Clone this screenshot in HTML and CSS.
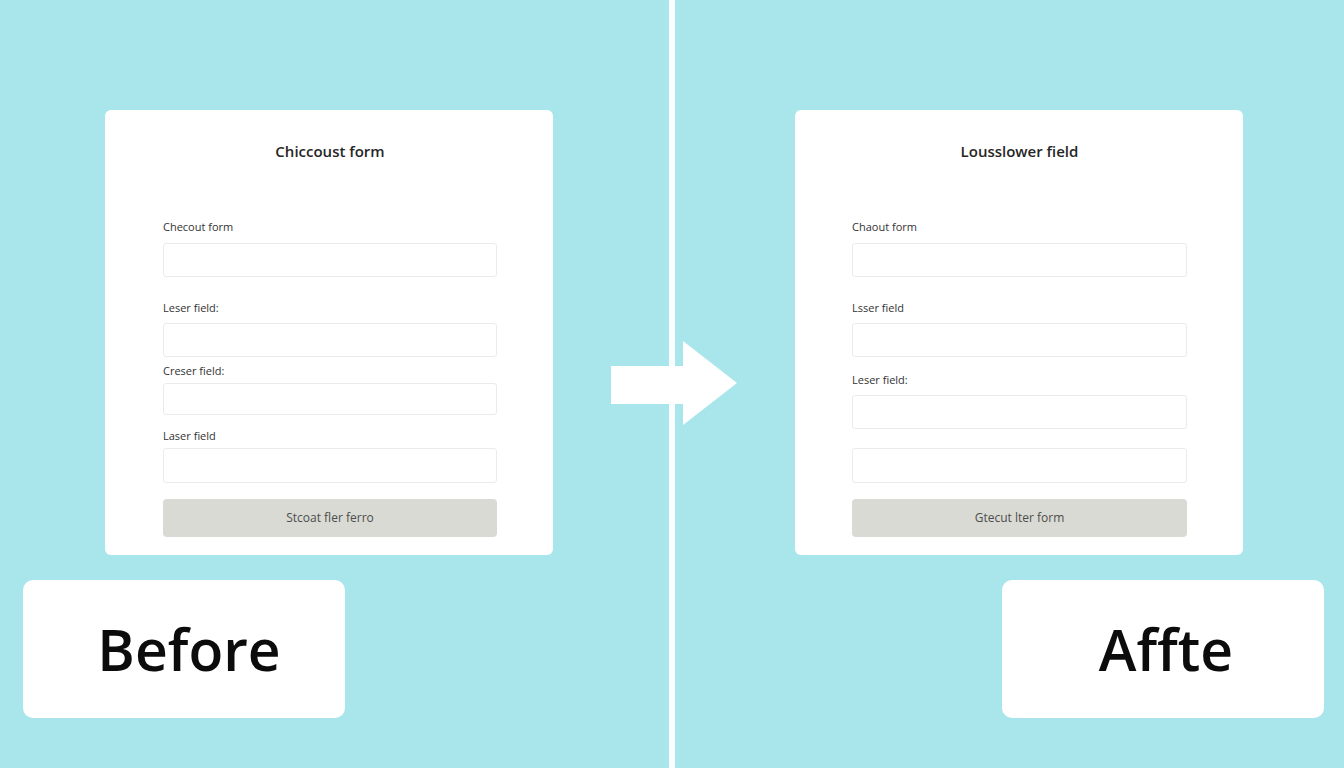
FILE: index.html
```html
<html>
<head>
    <title>Before / After</title>
    <link rel="stylesheet" href="styles.css">
</head>
<body>
    <div class="side left">
        <div class="card">
            <h2 class="title">Chiccoust form</h2>
            <label class="lbl first">Checout form</label>
            <div class="input"></div>
            <label class="lbl gap24">Leser field:</label>
            <div class="input"></div>
            <label class="lbl gap7">Creser field:</label>
            <div class="input short"></div>
            <label class="lbl gap14">Laser field</label>
            <div class="input tall"></div>
            <div class="btn">Stcoat fler ferro</div>
        </div>
        <div class="tag">Before</div>
    </div>

    <div class="divider"></div>

    <div class="side right">
        <div class="card">
            <h2 class="title">Lousslower field</h2>
            <label class="lbl first">Chaout form</label>
            <div class="input"></div>
            <label class="lbl gap24">Lsser field</label>
            <div class="input"></div>
            <label class="lbl gap16">Leser field:</label>
            <div class="input"></div>
            <div class="input tall spaced"></div>
            <div class="btn">Gtecut lter form</div>
        </div>
        <div class="tag">Affte</div>
    </div>

    <svg class="arrow" width="128" height="86" viewBox="0 0 128 86">
        <polygon points="0,25 72,25 72,0 126,42 72,84 72,63 0,63" fill="#fff"/>
    </svg>
</body>
</html>
```

FILE: styles.css
```css
body {
    margin: 0;
    width: 1344px;
    height: 768px;
    overflow: hidden;
    background-color: #a9e6ec;
    display: grid;
    grid-template-columns: 669px 6px 669px;
    font-family: 'Open Sans', 'Noto Sans', sans-serif;
    position: relative;
}

.divider {
    background-color: #fbfefe;
}

.side {
    display: flex;
    flex-direction: column;
    padding-top: 110px;
}

.card {
    width: 448px;
    height: 445px;
    box-sizing: border-box;
    background-color: #fff;
    border-radius: 6px;
    padding: 31px 56px 0 58px;
}

.left .card {
    margin-left: 105px;
}

.right .card {
    margin-left: 120px;
    padding-left: 57px;
}

.title {
    margin: 0;
    font-size: 15px;
    line-height: 20px;
    font-weight: 600;
    color: #262626;
    text-align: center;
}

.lbl {
    display: block;
    font-size: 11px;
    line-height: 14px;
    color: #333;
    margin-bottom: 9px;
}

.first { margin-top: 59px; }
.gap24 { margin-top: 24px; margin-bottom: 8px; }
.gap7 { margin-top: 7px; margin-bottom: 5px; }
.gap14 { margin-top: 14px; margin-bottom: 5px; }
.gap16 { margin-top: 16px; margin-bottom: 8px; }

.input {
    height: 34px;
    box-sizing: border-box;
    border: 1px solid #ebebeb;
    border-radius: 3px;
    background-color: #fff;
}

.input.short { height: 32px; }
.input.tall { height: 35px; }
.input.spaced { margin-top: 19px; }

.btn {
    margin-top: 16px;
    height: 38px;
    background-color: #d9dad4;
    border-radius: 4px;
    font-size: 12px;
    line-height: 38px;
    color: #4d4d4d;
    text-align: center;
}

.tag {
    margin-top: 25px;
    width: 322px;
    height: 138px;
    box-sizing: border-box;
    background-color: #fff;
    border-radius: 10px;
    display: flex;
    align-items: center;
    justify-content: center;
    font-size: 57px;
    font-weight: 600;
    color: #0c0c0c;
}

.left .tag {
    margin-left: 23px;
    padding-left: 10px;
}

.right .tag {
    margin-left: 327px;
    padding-left: 6px;
}

/* arrow sits on top of the divider line */
.arrow {
    position: absolute;
    left: 611px;
    top: 341px;
}
```
